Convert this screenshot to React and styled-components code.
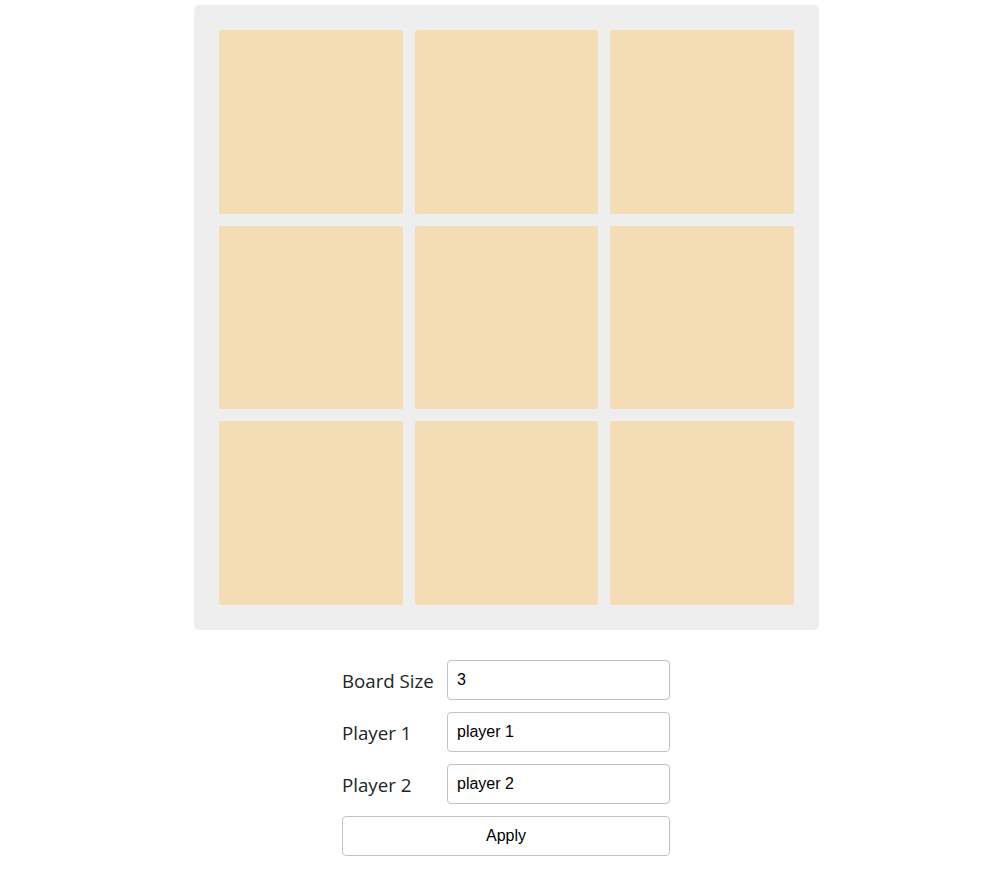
import React from 'react';
import styled, { createGlobalStyle } from 'styled-components';

const GlobalStyle = createGlobalStyle`
    body {
        margin: 0;
        background: #fff;
        font-family: "Open Sans", "Noto Sans", sans-serif;
    }
`;

const Page = styled.div`
    display: flex;
    flex-direction: column;
    align-items: center;
    padding: 5px 0 0 22px;
`;

const Board = styled.div`
    display: grid;
    grid-template-columns: repeat(${p => p.size}, 1fr);
    gap: 12px;
    width: 625px;
    height: 625px;
    box-sizing: border-box;
    padding: 25px;
    background: #eeeeee;
    border-radius: 5px;
`;

const Cell = styled.div`
    background: #f4ddb5;
    border-radius: 2px;
`;

const Form = styled.form`
    display: grid;
    grid-template-columns: 105px 223px;
    row-gap: 12px;
    margin: 30px 1px 0 0;
    align-items: center;
`;

const Label = styled.label`
    font-size: 18.7px;
    color: #212529;
    padding-top: 1px;
`;

const Input = styled.input`
    height: 40px;
    box-sizing: border-box;
    padding: 0 9px;
    border: 1px solid #c2c2c6;
    border-radius: 4px;
    font-family: "Liberation Sans", Arial, sans-serif;
    font-size: 16px;
    color: #000;
    background: #fff;
    outline: none;
`;

const Button = styled.button`
    grid-column: 1 / span 2;
    height: 40px;
    border: 1px solid #c2c2c6;
    border-radius: 4px;
    background: #fff;
    font-family: "Liberation Sans", Arial, sans-serif;
    font-size: 16px;
    color: #000;
`;

export default function App() {
    const size = 3;
    const cells = Array.from({ length: size * size });

    return (
        <Page>
            <GlobalStyle />
            <Board size={size}>
                {cells.map((_, i) => <Cell key={i} />)}
            </Board>
            <Form onSubmit={e => e.preventDefault()}>
                <Label>Board Size</Label>
                <Input defaultValue="3" />
                <Label>Player 1</Label>
                <Input defaultValue="player 1" />
                <Label>Player 2</Label>
                <Input defaultValue="player 2" />
                <Button type="submit">Apply</Button>
            </Form>
        </Page>
    );
}
